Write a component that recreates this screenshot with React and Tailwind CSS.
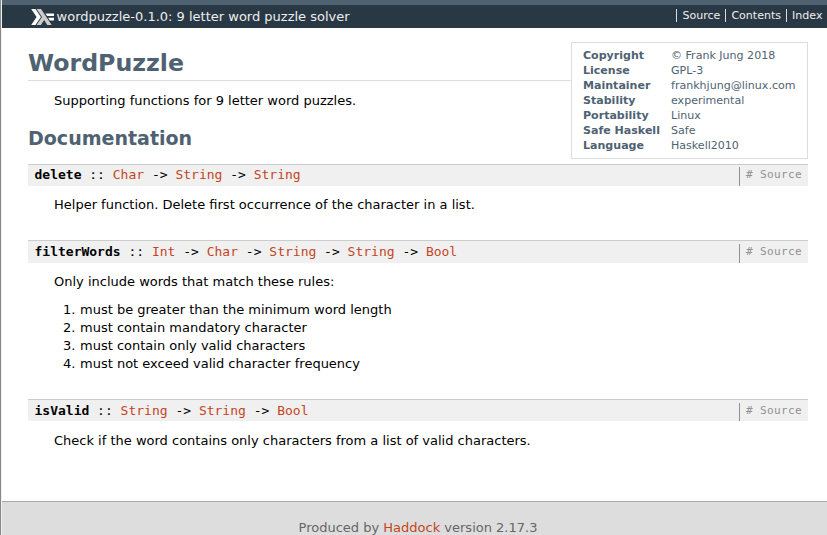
import React from "react";

const INFO = [
  ["Copyright", "© Frank Jung 2018"],
  ["License", "GPL-3"],
  ["Maintainer", "frankhjung@linux.com"],
  ["Stability", "experimental"],
  ["Portability", "Linux"],
  ["Safe Haskell", "Safe"],
  ["Language", "Haskell2010"],
];

function Logo() {
  return (
    <svg className="block h-4 w-[23px]" viewBox="0 0 23 16">
      <path d="M0.2 0h4.3l5.4 8-5.4 8H0.2l5.4-8z" fill="#fff" />
      <path d="M5.6 0h4.4l10.7 16h-4.4l-3.2-5-3.2 5H5.6L11 8z" fill="#ccc" />
      <path d="M14.4 4.5H23v2.6h-6.8zM17.2 8.8H23v2.6h-4.1z" fill="#fff" />
    </svg>
  );
}

function Signature({ name, types, className }) {
  return (
    <div
      className={`flex justify-between border-t border-[#ccc] bg-[#f0f0f0] pl-[6.5px] pr-1.5 font-['DejaVu_Sans_Mono',monospace] text-[13px] ${className}`}
    >
      <div className="whitespace-pre pt-0.5 leading-4">
        <b>{name}</b> ::{" "}
        {types.map((t, i) => (
          <React.Fragment key={i}>
            {i > 0 && " -> "}
            <a className="text-[#c4451d]">{t}</a>
          </React.Fragment>
        ))}
      </div>
      <div className="mt-0.5 flex border-l border-[#919191] pl-1.5 text-[11.05px] leading-[15px] tracking-[0.35px] text-[#919191]">
        # Source
      </div>
    </div>
  );
}

export default function App() {
  return (
    <div className="flex h-[535px] w-[827px] flex-col overflow-hidden border-l border-[#888] bg-white font-['DejaVu_Sans',sans-serif] text-[13px] leading-[18px] text-black">
      <div className="flex min-h-0 flex-1 flex-col border-l border-[#f0f0f0]">
        <header className="flex h-7 shrink-0 justify-between border-t-5 border-[#4e6272] bg-[#293845] pl-[29px] pr-[4.5px] text-[#ddd]">
          <div className="flex pt-1">
            <Logo />
            <span className="ml-[2.6px] leading-4 text-[#eee]">wordpuzzle-0.1.0: 9 letter word puzzle solver</span>
          </div>
          <nav className="flex items-start pt-1 text-[11.05px] leading-[13px] text-[#eee]">
            <a className="border-l border-[#ddd] pl-[5px] pr-[5px]">Source</a>
            <a className="border-l border-[#ddd] pl-[5px] pr-[5px]">Contents</a>
            <a className="border-l border-[#ddd] pl-[5px]">Index</a>
          </nav>
        </header>
        <main className="h-[473px] shrink-0 pl-[26px] pr-[19px] pt-3.5">
          <dl className="float-right h-[117px] w-[237px] border border-[#ddd] bg-white pl-[11px] pt-[5px] text-[11.05px] leading-[15px] text-[#4e6272]">
            {INFO.map(([k, v]) => (
              <div key={k} className="flex">
                <dt className="w-[88px] font-bold">{k}</dt>
                <dd>{v}</dd>
              </div>
            ))}
          </dl>
          <h1 className="h-[39px] border-b border-[#ddd] pt-[7px] text-[23.66px] font-bold leading-7 text-[#4e6272]">WordPuzzle</h1>
          <p className="ml-[26px] mt-[11px]">Supporting functions for 9 letter word puzzles.</p>
          <h2 className="mt-[17px] h-[37px] text-[19.05px] font-bold leading-[22px] text-[#4e6272]">Documentation</h2>
          <Signature className="h-[22px]" name="delete" types={["Char", "String", "String"]} />
          <p className="ml-[26px] mt-[10px]">Helper function. Delete first occurrence of the character in a list.</p>
          <Signature className="mt-[26px] h-[23px] pt-px" name="filterWords" types={["Int", "Char", "String", "String", "Bool"]} />
          <p className="ml-[26px] mt-[10px]">Only include words that match these rules:</p>
          <ol className="ml-[52px] mt-[10px]">
            {[
              "must be greater than the minimum word length",
              "must contain mandatory character",
              "must contain only valid characters",
              "must not exceed valid character frequency",
            ].map((rule, i) => (
              <li key={rule} className="-ml-[17px] flex">
                <span className="w-[17px]">{i + 1}.</span>
                {rule}
              </li>
            ))}
          </ol>
          <Signature className="mt-[26px] h-[22px] pt-px" name="isValid" types={["String", "String", "Bool"]} />
          <p className="ml-[26px] mt-[11px]">Check if the word contains only characters from a list of valid characters.</p>
        </main>
        <footer className="flex-1 border-t border-[#aaa] bg-[#ddd] pl-[7px] pt-[17px] text-center text-[#666]">
          <p>
            Produced by <a className="text-[#c4451d]">Haddock</a> version 2.17.3
          </p>
        </footer>
      </div>
    </div>
  );
}
